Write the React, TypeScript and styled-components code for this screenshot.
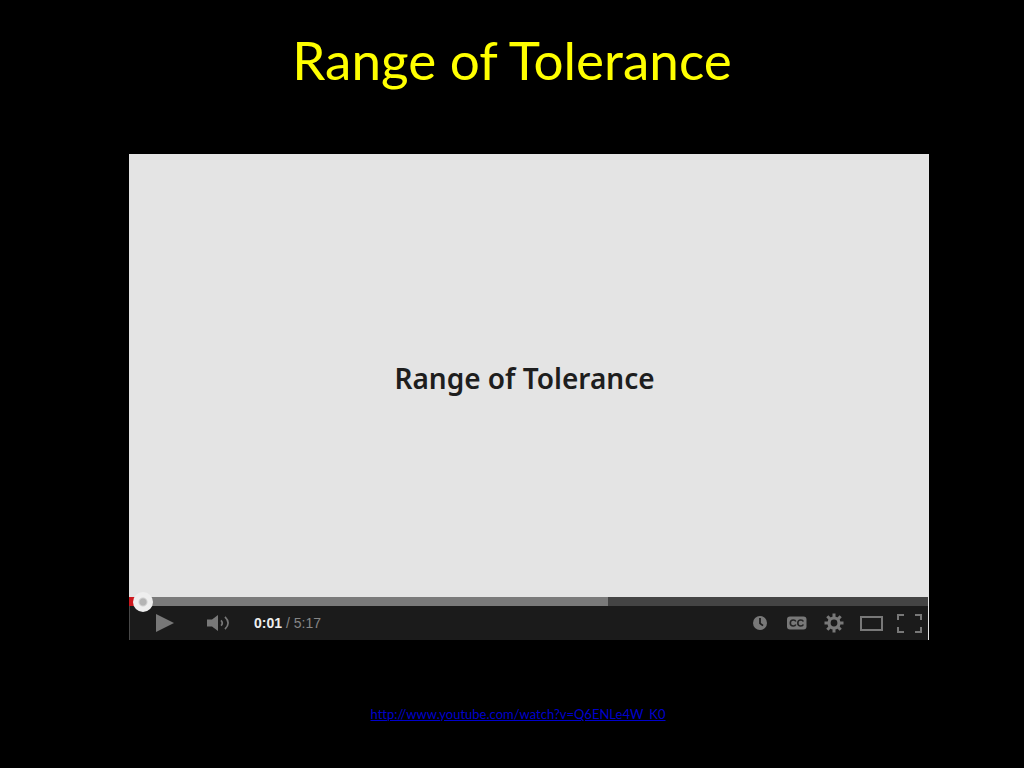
import React, { useState } from "react";
import styled, { createGlobalStyle } from "styled-components";

const GlobalStyle = createGlobalStyle`
  * { box-sizing: border-box; }
  body { margin: 0; background: #000; font-family: Lato, "Open Sans", sans-serif; }
`;

const Slide = styled.main`
  display: flex;
  flex-direction: column;
  min-height: 100vh;
`;

const Title = styled.h1`
  margin: 0;
  padding: 30px 0 34px;
  color: #ff0;
  font-size: 53px;
  line-height: 60px;
  font-weight: 400;
  text-align: center;
`;

const Player = styled.section`
  margin: 30px 95px 0 129px;
  border-right: 1px solid #e6e6e6;
  background: #1b1b1b;
`;

const Video = styled.div`
  display: flex;
  align-items: center;
  justify-content: center;
  aspect-ratio: 799 / 443;
  padding: 4px 8px 0 0;
  background: #e4e4e4;
  color: #1e1e1e;
  font-family: "Noto Sans", sans-serif;
  font-size: 28px;
  font-weight: 600;
`;

const Seek = styled.input<{ $played: number; $buffered: number }>`
  display: block;
  appearance: none;
  width: 100%;
  height: 9px;
  margin: 0;
  background: linear-gradient(
    to right,
    #cc181e ${(p) => p.$played}%,
    #7a7a7a ${(p) => p.$played}%,
    #7a7a7a ${(p) => p.$buffered}%,
    #444 ${(p) => p.$buffered}%
  );

  &::-webkit-slider-thumb {
    appearance: none;
    width: 20px;
    height: 20px;
    border: 0;
    border-radius: 50%;
    background: radial-gradient(circle, #b4b4b4 3px, #eee 5px);
  }
`;

const Controls = styled.div`
  display: flex;
  align-items: center;
  justify-content: space-between;
  height: 34px;
  padding: 0 6px 0 24px;
  border-left: 1px solid #484848;
`;

const Group = styled.div<{ $gap: number }>`
  display: flex;
  align-items: center;
  gap: ${(p) => p.$gap}px;
`;

const IconButton = styled.button`
  display: flex;
  padding: 0;
  border: 0;
  background: none;
  color: #787878;
  cursor: pointer;

  svg { display: block; }
`;

const Time = styled.span`
  color: #868686;
  font: 14px/16px "Liberation Sans", Arial, sans-serif;

  b { color: #eee; }
`;

const Source = styled.a`
  align-self: center;
  margin-top: 66px;
  padding-left: 12px;
  color: #00c;
  font-size: 13px;
  line-height: 16px;
  font-variant-ligatures: none;
`;

const teeth = [0, 45, 90, 135, 180, 225, 270, 315];

export default function App() {
  const [position, setPosition] = useState(1.6);
  return (
    <>
      <GlobalStyle />
      <Slide>
        <Title>Range of Tolerance</Title>
        <Player aria-label="Video player">
          <Video>Range of Tolerance</Video>
          <Seek
            type="range"
            aria-label="Seek"
            min={0}
            max={317}
            step={0.1}
            value={position}
            $played={(position / 317) * 100 + 1}
            $buffered={60}
            onChange={(e) => setPosition(Number(e.target.value))}
          />
          <Controls>
            <Group $gap={24}>
              <IconButton aria-label="Play">
                <svg width="26" height="20" viewBox="0 0 26 20">
                  <path d="M2 1 20 10 2 19Z" fill="currentColor" />
                </svg>
              </IconButton>
              <IconButton aria-label="Volume">
                <svg width="26" height="20" viewBox="0 0 26 20">
                  <path d="M3 6.500H8l6-4.500v16l-6-4.500H3Z" fill="currentColor" />
                  <path d="M17 7.300q2.600 2.700 0 5.400M21 3.800q6.200 6.200 0 12.400" fill="none" stroke="currentColor" strokeWidth="1.700" />
                </svg>
              </IconButton>
              <Time><b>0:01</b> / 5:17</Time>
            </Group>
            <Group $gap={14}>
              <IconButton aria-label="Watch later">
                <svg width="20" height="20" viewBox="0 0 20 20">
                  <circle cx="8" cy="10" r="7" fill="currentColor" />
                  <path d="M8 5v5.300l3 2.400" fill="none" stroke="#1b1b1b" strokeWidth="1.700" />
                </svg>
              </IconButton>
              <IconButton aria-label="Captions">
                <svg width="22" height="20" viewBox="0 0 22 20">
                  <rect x="1" y="3.500" width="19.500" height="13" rx="3" fill="currentColor" />
                  <path d="M9.800 8.500Q9.300 7 7.300 7 4.300 7 4.300 10t3 3q2 0 2.500-1.500M17.300 8.500q-.5-1.500-2.500-1.500-3 0-3 3t3 3q2 0 2.500-1.500" fill="none" stroke="#242424" strokeWidth="1.600" />
                </svg>
              </IconButton>
              <IconButton aria-label="Settings">
                <svg width="24" height="20" viewBox="0 0 24 20">
                  <circle cx="12" cy="10" r="5" fill="none" stroke="currentColor" strokeWidth="3.200" />
                  {teeth.map((a) => (
                    <path key={a} d="M10.500 4.500V.5h3v4Z" fill="currentColor" transform={`rotate(${a} 12 10)`} />
                  ))}
                </svg>
              </IconButton>
              <IconButton aria-label="Theater mode">
                <svg width="23" height="20" viewBox="0 0 23 20">
                  <rect x="1" y="4" width="21" height="13" fill="none" stroke="currentColor" strokeWidth="2" />
                </svg>
              </IconButton>
              <IconButton aria-label="Full screen">
                <svg width="25" height="20" viewBox="0 0 25 20">
                  <path d="M1 7V2H7M18 2h6v5M1 14v5H7M18 19h6v-5" fill="none" stroke="currentColor" strokeWidth="2" />
                </svg>
              </IconButton>
            </Group>
          </Controls>
        </Player>
        <Source href="http://www.youtube.com/watch?v=Q6ENLe4W_K0">
          http://www.youtube.com/watch?v=Q6ENLe4W_K0
        </Source>
      </Slide>
    </>
  );
}
